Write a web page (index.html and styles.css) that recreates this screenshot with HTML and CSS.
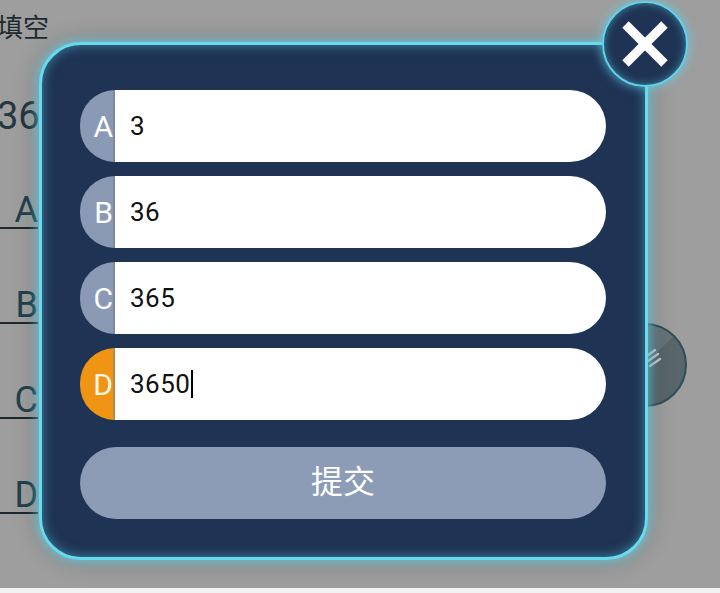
FILE: index.html
```html
<!DOCTYPE html>
<html lang="zh">
<head>
<meta charset="utf-8">
<title>填空</title>
<link rel="stylesheet" href="styles.css">
</head>
<body>
<div class="screen">
  <div class="page">
    <div class="title">填空</div>
    <div class="answer">36</div>
    <div class="opt">A</div>
    <div class="opt">B</div>
    <div class="opt">C</div>
    <div class="opt">D</div>
  </div>
  <div class="fab">
    <svg width="84" height="84" viewBox="0 0 84 84"><g stroke="#d8dde0" stroke-width="2.5" stroke-linecap="round" opacity="0.8"><line x1="44" y1="33" x2="52" y2="27"/><line x1="45" y1="38" x2="55" y2="31"/><line x1="47" y1="43" x2="57" y2="36"/></g></svg>
  </div>
  <div class="modal">
    <div class="close">
      <svg width="86" height="86" viewBox="0 0 86 86"><g stroke="#ffffff" stroke-width="9"><line x1="23.5" y1="23.5" x2="62.5" y2="62.5"/><line x1="62.5" y1="23.5" x2="23.5" y2="62.5"/></g></svg>
    </div>
    <div class="row"><span class="tag">A</span><div class="field">3</div></div>
    <div class="row"><span class="tag">B</span><div class="field">36</div></div>
    <div class="row"><span class="tag">C</span><div class="field">365</div></div>
    <div class="row"><span class="tag tag-active">D</span><div class="field">3650<span class="caret"></span></div></div>
    <div class="submit">提交</div>
  </div>
</div>
<div class="navbar"></div>
</body>
</html>
```

FILE: styles.css
```css
* { box-sizing: border-box; }
html, body { margin: 0; padding: 0; }
body {
  width: 720px;
  height: 593px;
  overflow: hidden;
  background: #9e9e9e;
  font-family: Roboto, "Noto Sans CJK SC", sans-serif;
}
.screen {
  position: relative;
  height: 588px;
  background: #9e9e9e;
}
.page {
  padding-top: 11px;
  margin-left: -3px;
  color: #22404b;
}
.title {
  font-family: "Noto Sans CJK SC", sans-serif;
  font-size: 26px;
  line-height: 30px;
  color: #1d2a30;
}
.answer {
  margin-top: 55px;
  font-size: 38px;
  line-height: 40px;
  color: #26373f;
}
.opt {
  width: 41px;
  margin-top: 60px;
  font-size: 36px;
  line-height: 33px;
  text-align: right;
  border-bottom: 2px solid #1c2a30;
}
.answer + .opt { margin-top: 58px; }
.fab {
  position: absolute;
  left: 603px;
  top: 323px;
  width: 84px;
  height: 84px;
  border-radius: 50%;
  background: linear-gradient(135deg, #6a777c 0%, #65727a 50%, #59666b 50%, #57646a 100%);
  border: 2px solid #2f4e58;
}
.fab svg { position: absolute; left: -2px; top: -2px; }
.modal {
  position: absolute;
  left: 39px;
  top: 42px;
  width: 609px;
  padding: 45px 39px 38px 38px;
  background: #1f3354;
  border: 3px solid #66dbf0;
  border-radius: 42px;
  box-shadow: 0 0 10px 3px rgba(95, 215, 240, 0.6), 0 0 26px rgba(0, 0, 0, 0.25), inset 0 0 12px rgba(95, 215, 240, 0.5);
  display: flex;
  flex-direction: column;
  gap: 14px;
}
.close {
  position: absolute;
  left: 560px;
  top: -44px;
  width: 86px;
  height: 86px;
  border-radius: 50%;
  background: radial-gradient(circle, #1f3354 0%, #1f3354 58%, #172844 82%, #1c3d5c 96%);
  border: 2px solid #5fd4ec;
  box-shadow: 0 0 10px 2px rgba(95, 212, 236, 0.6), inset 0 0 9px rgba(95, 212, 236, 0.6);
}
.close svg { position: absolute; left: -2px; top: -2px; }
.row {
  display: flex;
  height: 72px;
}
.tag {
  width: 35px;
  flex: none;
  background: #8a9ab5;
  border-radius: 36px 0 0 36px;
  border-right: 2px solid #7d889b;
  color: #ffffff;
  font-size: 30px;
  display: flex;
  align-items: center;
  justify-content: flex-end;
  padding-right: 0;
}
.tag-active {
  background: #ef9513;
  border-right-color: #b88a4a;
  color: #fff5e6;
}
.field {
  flex: 1;
  background: #ffffff;
  border-radius: 0 36px 36px 0;
  padding-left: 15px;
  font-size: 26px;
  letter-spacing: 0.5px;
  color: #111111;
  display: flex;
  align-items: center;
}
.caret {
  display: inline-block;
  width: 2px;
  height: 28px;
  margin-left: 1px;
  background: #000000;
}
.submit {
  margin-top: 13px;
  height: 72px;
  padding-bottom: 8px;
  border-radius: 36px;
  background: #8c9cb6;
  color: #ffffff;
  font-family: "Noto Sans CJK SC", sans-serif;
  font-size: 32px;
  display: flex;
  align-items: center;
  justify-content: center;
}
.navbar {
  height: 5px;
  background: #f2f2f2;
}
```
